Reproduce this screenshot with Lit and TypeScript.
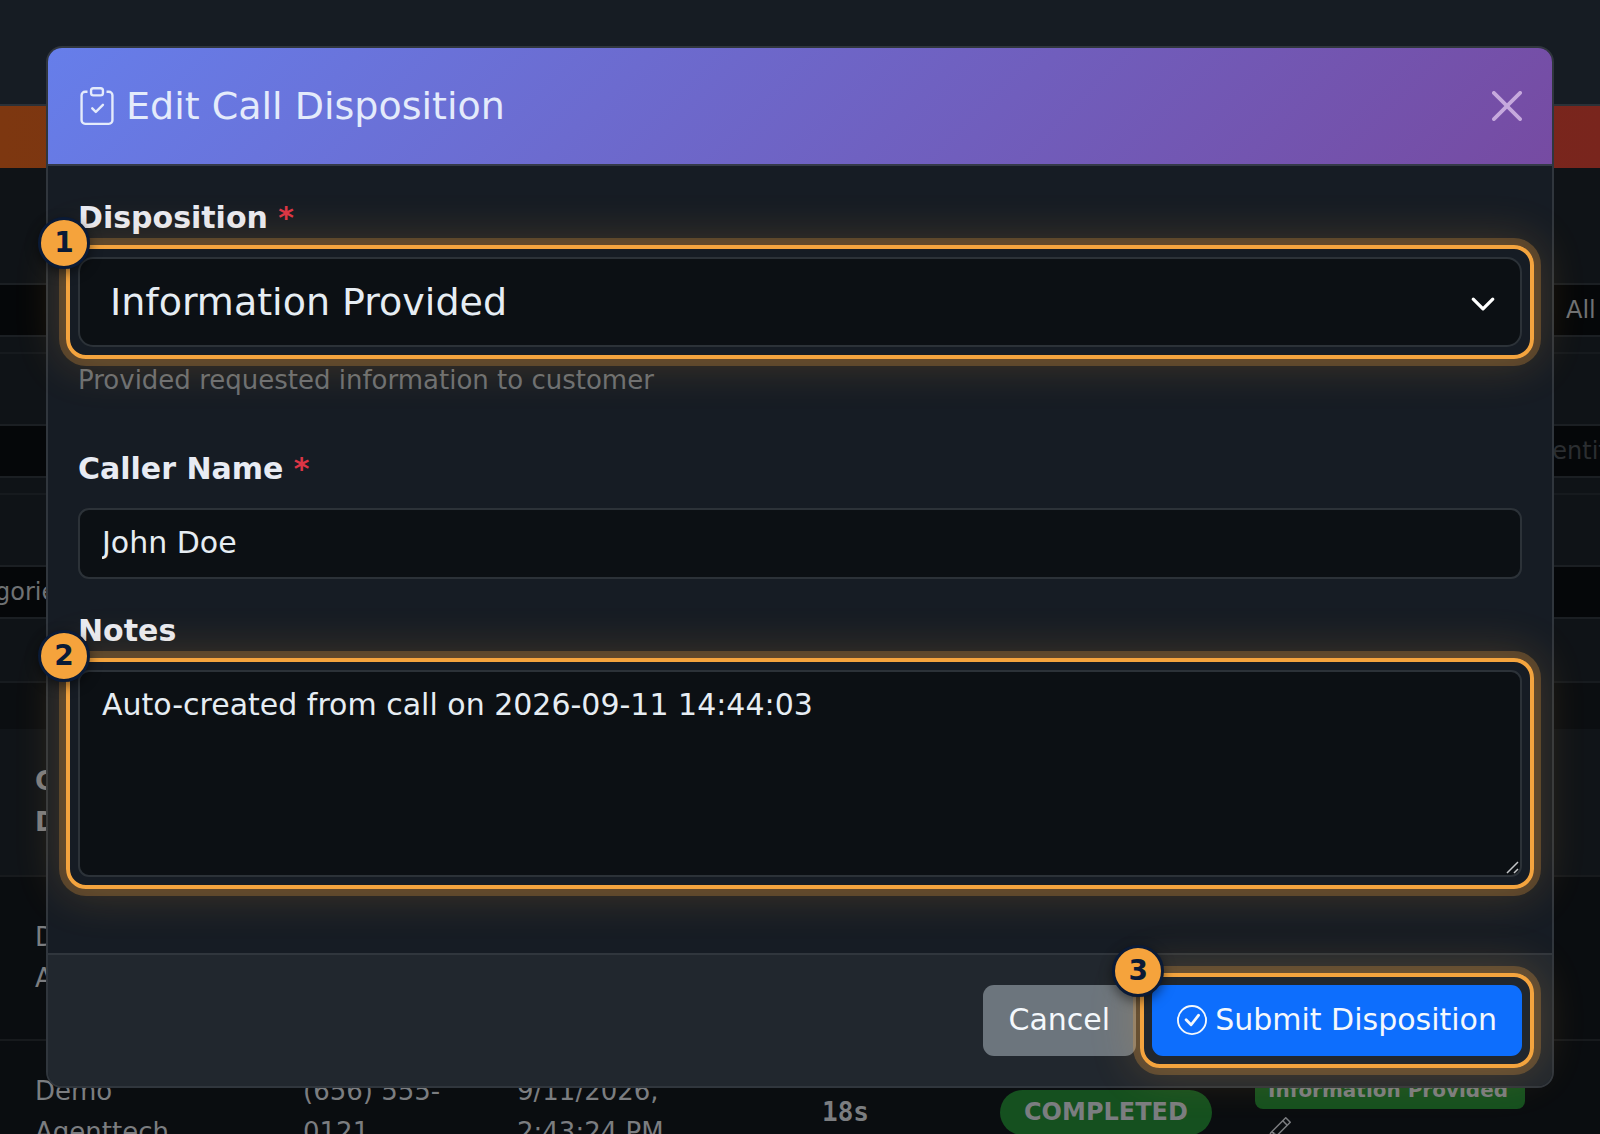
import { LitElement, html, css } from "lit";
import { customElement, property, state } from "lit/decorators.js";

const font = css`"DejaVu Sans", Verdana, sans-serif`;

/* Highlight ring with a numbered badge around the slotted control. */
@customElement("tour-step")
export class TourStep extends LitElement {
  @property({ type: Number }) step = 1;

  static styles = css`
    :host {
      display: grid;
      position: relative;
    }
    .ring {
      position: absolute;
      inset: -12px;
      border: 4px solid #f4a43e;
      border-radius: 20px;
      box-shadow:
        0 0 0 7px rgba(244, 164, 62, 0.26),
        0 0 46px 6px rgba(244, 164, 62, 0.2);
      pointer-events: none;
      z-index: 1;
    }
    .badge {
      position: absolute;
      left: -40px;
      top: -40px;
      width: 46px;
      height: 46px;
      border: 3px solid #0a1a36;
      border-radius: 50%;
      background: #f5a33c;
      color: #0a1a36;
      font: bold 28px/46px ${font};
      text-align: center;
      box-shadow: 0 4px 12px rgba(0, 0, 0, 0.5);
      z-index: 2;
    }
  `;

  render() {
    return html`
      <slot></slot>
      <div class="ring"></div>
      <div class="badge">${this.step}</div>
    `;
  }
}

/* Dimmed call log that lies behind the dialog. */
@customElement("call-log")
export class CallLog extends LitElement {
  private calls = [
    { agent: ["Demo", "Agenttech"], phone: [], time: [], duration: "", status: "", disposition: "" },
    {
      agent: ["Demo", "Agenttech"],
      phone: ["(656) 555-", "0121"],
      time: ["9/11/2026,", "2:43:24 PM"],
      duration: "18s",
      status: "COMPLETED",
      disposition: "Information Provided",
    },
  ];

  static styles = css`
    :host {
      display: block;
      background: #0a0d10;
      color: #7b7d80;
      font: 26px/41px ${font};
    }
    .top {
      height: 104px;
      background: #161c23;
      border-bottom: 2px solid #2b3138;
    }
    .banner {
      height: 62px;
      background: linear-gradient(90deg, #7d3710, #79251d);
    }
    .filters {
      background: #0f1317;
      padding-top: 115px;
    }
    .filter {
      display: flex;
      justify-content: space-between;
      height: 50px;
      border: solid #1b1f23;
      border-width: 2px 0;
      background: #050709;
    }
    .gap {
      height: 15px;
      border-bottom: 2px solid #161a1e;
    }
    .space {
      height: 70px;
    }
    select,
    input {
      appearance: none;
      box-sizing: border-box;
      border: 0;
      padding: 0;
      margin: 0;
      background: transparent;
      color: #6f7173;
      font: 24px/36px ${font};
    }
    .left {
      margin-left: -98px;
      width: 240px;
    }
    .right {
      width: 34px;
      overflow: hidden;
    }
    .wide {
      width: 70px;
    }
    input::placeholder {
      color: #2b2e31;
      opacity: 1;
    }
    .bar {
      height: 62px;
      background: #0f1317;
      border-bottom: 2px solid #171b1f;
    }
    .strip {
      height: 46px;
      background: #0b0e11;
    }
    table {
      width: 100%;
      border-collapse: collapse;
      table-layout: fixed;
    }
    th,
    td {
      padding: 0 0 0 35px;
      text-align: left;
      vertical-align: middle;
      border-bottom: 2px solid #171a1d;
    }
    th {
      height: 146px;
      background: #101418;
    }
    td {
      height: 162px;
    }
    tr.last td {
      height: 142px;
      border: 0;
    }
    .duration {
      font: bold 26px/41px "DejaVu Sans Mono", monospace;
    }
    .pill {
      display: inline-block;
      padding: 2px 24px;
      border-radius: 24px;
      background: #15501f;
      font-size: 24px;
      font-weight: bold;
    }
    .tag {
      display: block;
      width: 244px;
      padding: 0 13px;
      border-radius: 8px;
      background: #15501f;
      font-size: 20px;
      line-height: 38px;
      font-weight: bold;
      white-space: nowrap;
      margin-bottom: 8px;
    }
    .pencil {
      display: block;
      width: 24px;
      height: 24px;
      margin: 0 0 12px 12px;
      fill: currentColor;
    }
    .agent {
      width: 303px;
    }
    .phone {
      width: 214px;
    }
    .time {
      width: 305px;
    }
    .length {
      width: 178px;
    }
    .status {
      width: 255px;
    }
    .inset {
      padding-left: 0;
    }
  `;

  render() {
    return html`
      <div class="top"></div>
      <div class="banner"></div>
      <div class="filters">
        <div class="filter">
          <span></span>
          <select class="right" aria-label="Status"><option>All</option></select>
        </div>
        <div class="gap"></div>
        <div class="space"></div>
        <div class="filter">
          <span></span>
          <input class="wide" aria-label="Search" placeholder="Identifier" />
        </div>
        <div class="gap"></div>
        <div class="space"></div>
        <div class="filter">
          <select class="left" aria-label="Category"><option>All Categories</option></select>
        </div>
      </div>
      <div class="bar"></div>
      <div class="strip"></div>
      <table>
        <colgroup>
          <col class="agent" />
          <col class="phone" />
          <col class="time" />
          <col class="length" />
          <col class="status" />
          <col />
        </colgroup>
        <thead>
          <tr>
            <th>C<br />D</th>
            <th colspan="5"></th>
          </tr>
        </thead>
        <tbody>
          ${this.calls.map(
            (c, i) => html`<tr class=${i === this.calls.length - 1 ? "last" : ""}>
              <td>${c.agent.map((t) => html`<div>${t}</div>`)}</td>
              <td class="inset">${c.phone.map((t) => html`<div>${t}</div>`)}</td>
              <td class="inset">${c.time.map((t) => html`<div>${t}</div>`)}</td>
              <td class="inset duration">${c.duration}</td>
              <td class="inset">${c.status ? html`<span class="pill">${c.status}</span>` : ""}</td>
              <td class="inset">
                ${c.disposition
                  ? html`<span class="tag">${c.disposition}</span>
                      <svg class="pencil" viewBox="0 0 16 16" aria-hidden="true">
                        <path d="M12.146.146a.5.5 0 0 1 .708 0l3 3a.5.5 0 0 1 0 .708l-10 10a.5.5 0 0 1-.168.11l-5 2a.5.5 0 0 1-.65-.65l2-5a.5.5 0 0 1 .11-.168zM11.207 2.5 13.5 4.793 14.793 3.5 12.5 1.207zm1.586 3L10.5 3.207 4 9.707V10h.5a.5.5 0 0 1 .5.5v.5h.5a.5.5 0 0 1 .5.5v.5h.293zm-9.761 5.175-.106.106-1.528 3.821 3.821-1.528.106-.106A.5.5 0 0 1 5 12.5V12h-.5a.5.5 0 0 1-.5-.5V11h-.5a.5.5 0 0 1-.468-.325" />
                      </svg>`
                  : ""}
              </td>
            </tr>`
          )}
        </tbody>
      </table>
    `;
  }
}

@customElement("app-root")
export class AppRoot extends LitElement {
  @state() private callerName = "John Doe";
  @state() private notes = "Auto-created from call on 2026-09-11 14:44:03";

  static styles = css`
    :host {
      display: block;
      position: relative;
      height: 100vh;
      overflow: hidden;
      background: #0a0d10;
      font: 30px/45px ${font};
      color: #e6edf3;
    }
    .overlay {
      position: absolute;
      inset: 0;
      padding: 46px;
    }
    .modal {
      border: 2px solid #30363d;
      border-radius: 16px;
      background: #161c24;
    }
    .header {
      display: flex;
      align-items: center;
      justify-content: space-between;
      padding: 30px;
      border-bottom: 2px solid #343a48;
      border-radius: 14px 14px 0 0;
      background: linear-gradient(135deg, #667eea 0%, #764ba2 100%) padding-box;
    }
    h2 {
      display: flex;
      align-items: center;
      gap: 10px;
      margin: 0;
      font: 38px/56px ${font};
      color: #e4ebfb;
    }
    h2 svg {
      width: 38px;
      height: 38px;
      fill: currentColor;
    }
    button {
      font: inherit;
      cursor: pointer;
    }
    .close {
      display: flex;
      padding: 0;
      border: 0;
      background: none;
    }
    .close svg {
      width: 30px;
      height: 30px;
      fill: #c6a9dd;
    }
    .body {
      padding: 30px 30px 76px;
    }
    label {
      display: block;
      margin-bottom: 17px;
      line-height: 44px;
      font-weight: bold;
      color: #e8ebf3;
    }
    .required {
      color: #dc3545;
    }
    select,
    input,
    textarea {
      display: block;
      box-sizing: border-box;
      width: 100%;
      margin: 0;
      border: 2px solid #2c3238;
      border-radius: 11px;
      background: #0c1014;
      color: #e6edf3;
      font: 30px/45px ${font};
      outline: 0;
    }
    select {
      appearance: none;
      grid-area: 1 / 1;
      height: 90px;
      padding: 15px 70px 15px 30px;
      border-radius: 15px;
      font-size: 38px;
      line-height: 56px;
    }
    input {
      height: 71px;
      padding: 10px 22px 12px;
    }
    textarea {
      grid-area: 1 / 1;
      height: 207px;
      padding: 10px 22px;
      resize: none;
    }
    .stack {
      display: grid;
    }
    .chevron {
      grid-area: 1 / 1;
      align-self: center;
      justify-self: end;
      width: 26px;
      height: 26px;
      margin: 4px 26px 0 0;
      pointer-events: none;
    }
    .grip {
      grid-area: 1 / 1;
      align-self: end;
      justify-self: end;
      width: 14px;
      height: 14px;
      margin: 2px;
      pointer-events: none;
    }
    .help {
      margin: 10px 0 44px;
      font-size: 26px;
      line-height: 46px;
      color: #6a6f74;
    }
    .name {
      margin-bottom: 30px;
    }
    .footer {
      display: flex;
      justify-content: flex-end;
      gap: 16px;
      padding: 30px;
      border-top: 2px solid #30363d;
      border-radius: 0 0 14px 14px;
      background: #21272e;
    }
    .btn {
      display: flex;
      align-items: center;
      gap: 8px;
      height: 71px;
      padding: 0 26px 2px;
      border: 0;
      border-radius: 11px;
      color: #f4f8fc;
      background: #6c757d;
    }
    .primary {
      padding: 0 25px 2px;
      background: #0d6efd;
    }
    .primary svg {
      width: 30px;
      height: 30px;
      fill: currentColor;
    }
  `;

  render() {
    return html`
      <call-log inert></call-log>
      <div class="overlay">
        <div class="modal" role="dialog" aria-labelledby="title">
          <div class="header">
            <h2 id="title">
              <svg viewBox="0 0 16 16" aria-hidden="true">
                <path fill-rule="evenodd" d="M10.854 7.146a.5.5 0 0 1 0 .708l-3 3a.5.5 0 0 1-.708 0l-1.5-1.5a.5.5 0 1 1 .708-.708L7.5 9.793l2.646-2.647a.5.5 0 0 1 .708 0" />
                <path d="M4 1.5H3a2 2 0 0 0-2 2V14a2 2 0 0 0 2 2h10a2 2 0 0 0 2-2V3.5a2 2 0 0 0-2-2h-1v1h1a1 1 0 0 1 1 1V14a1 1 0 0 1-1 1H3a1 1 0 0 1-1-1V3.5a1 1 0 0 1 1-1h1z" />
                <path d="M9.5 1a.5.5 0 0 1 .5.5v1a.5.5 0 0 1-.5.5h-3a.5.5 0 0 1-.5-.5v-1a.5.5 0 0 1 .5-.5zm-3-1A1.5 1.5 0 0 0 5 1.5v1A1.5 1.5 0 0 0 6.5 4h3A1.5 1.5 0 0 0 11 2.5v-1A1.5 1.5 0 0 0 9.5 0z" />
              </svg>
              Edit Call Disposition
            </h2>
            <button class="close" type="button" aria-label="Close">
              <svg viewBox="0 0 16 16" aria-hidden="true">
                <path d="M.293.293a1 1 0 0 1 1.414 0L8 6.586 14.293.293a1 1 0 1 1 1.414 1.414L9.414 8l6.293 6.293a1 1 0 0 1-1.414 1.414L8 9.414l-6.293 6.293a1 1 0 0 1-1.414-1.414L6.586 8 .293 1.707a1 1 0 0 1 0-1.414z" />
              </svg>
            </button>
          </div>
          <div class="body">
            <label for="disposition">Disposition <span class="required">*</span></label>
            <tour-step .step=${1}>
              <div class="stack">
                <select id="disposition" required>
                  <option>Information Provided</option>
                </select>
                <svg class="chevron" viewBox="0 0 16 16" aria-hidden="true">
                  <path d="m2 5 6 6 6-6" fill="none" stroke="#fff" stroke-width="2" stroke-linecap="round" stroke-linejoin="round" />
                </svg>
              </div>
            </tour-step>
            <div class="help">Provided requested information to customer</div>
            <label for="caller">Caller Name <span class="required">*</span></label>
            <div class="name">
              <input id="caller" type="text" required .value=${this.callerName}
                @input=${(e: Event) => (this.callerName = (e.target as HTMLInputElement).value)} />
            </div>
            <label for="notes">Notes</label>
            <tour-step .step=${2}>
              <div class="stack">
                <textarea id="notes" .value=${this.notes}
                  @input=${(e: Event) => (this.notes = (e.target as HTMLTextAreaElement).value)}></textarea>
                <svg class="grip" viewBox="0 0 14 14" aria-hidden="true">
                  <path d="M1 12 12 1M8 12l4-4" fill="none" stroke="#c4c6c8" stroke-width="1.5" />
                </svg>
              </div>
            </tour-step>
          </div>
          <div class="footer">
            <button class="btn" type="button">Cancel</button>
            <tour-step .step=${3}>
              <button class="btn primary" type="submit">
                <svg viewBox="0 0 16 16" aria-hidden="true">
                  <path d="M8 15A7 7 0 1 1 8 1a7 7 0 0 1 0 14m0 1A8 8 0 1 0 8 0a8 8 0 0 0 0 16" />
                  <path d="m10.97 4.97-.02.022-3.473 4.425-2.093-2.094a.75.75 0 0 0-1.06 1.06L6.97 11.03a.75.75 0 0 0 1.079-.02l3.992-4.99a.75.75 0 0 0-1.071-1.05" />
                </svg>
                Submit Disposition
              </button>
            </tour-step>
          </div>
        </div>
      </div>
    `;
  }
}
